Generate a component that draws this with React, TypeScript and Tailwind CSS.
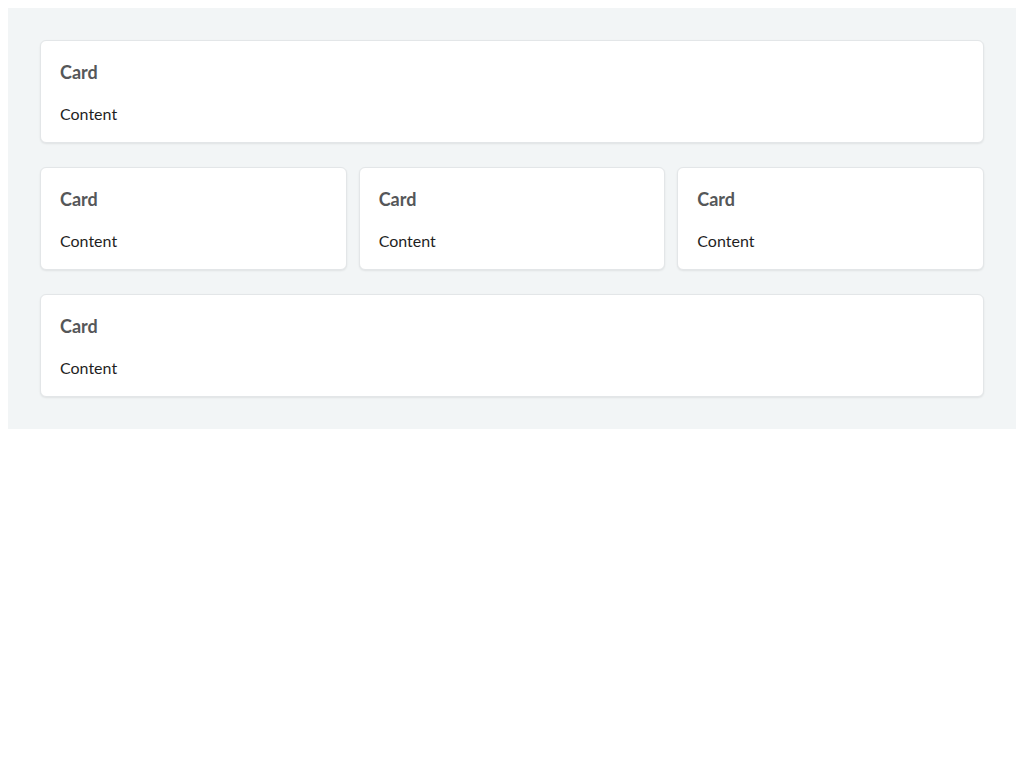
import React from 'react';

const Card: React.FC = () => (
  <div className="bg-white border border-[#e3e6e8] rounded-md shadow-[0_1px_2px_rgba(0,0,0,0.08)] px-[19px] pt-[18px] pb-[18px]">
    <h3 className="text-[18px] font-bold text-[#555759] leading-[26px]">Card</h3>
    <p className="mt-[19px] text-[16px] text-[#1f1f1f] leading-[20px]">Content</p>
  </div>
);

const App: React.FC = () => {
  return (
    <div className="p-2 bg-white min-h-screen" style={{ fontFamily: 'Lato, "Open Sans", sans-serif' }}>
      <div className="bg-[#f2f5f6] p-8 flex flex-col gap-6">
        <Card />
        <div className="grid grid-cols-3 gap-3">
          <Card />
          <Card />
          <Card />
        </div>
        <Card />
      </div>
    </div>
  );
};

export default App;
